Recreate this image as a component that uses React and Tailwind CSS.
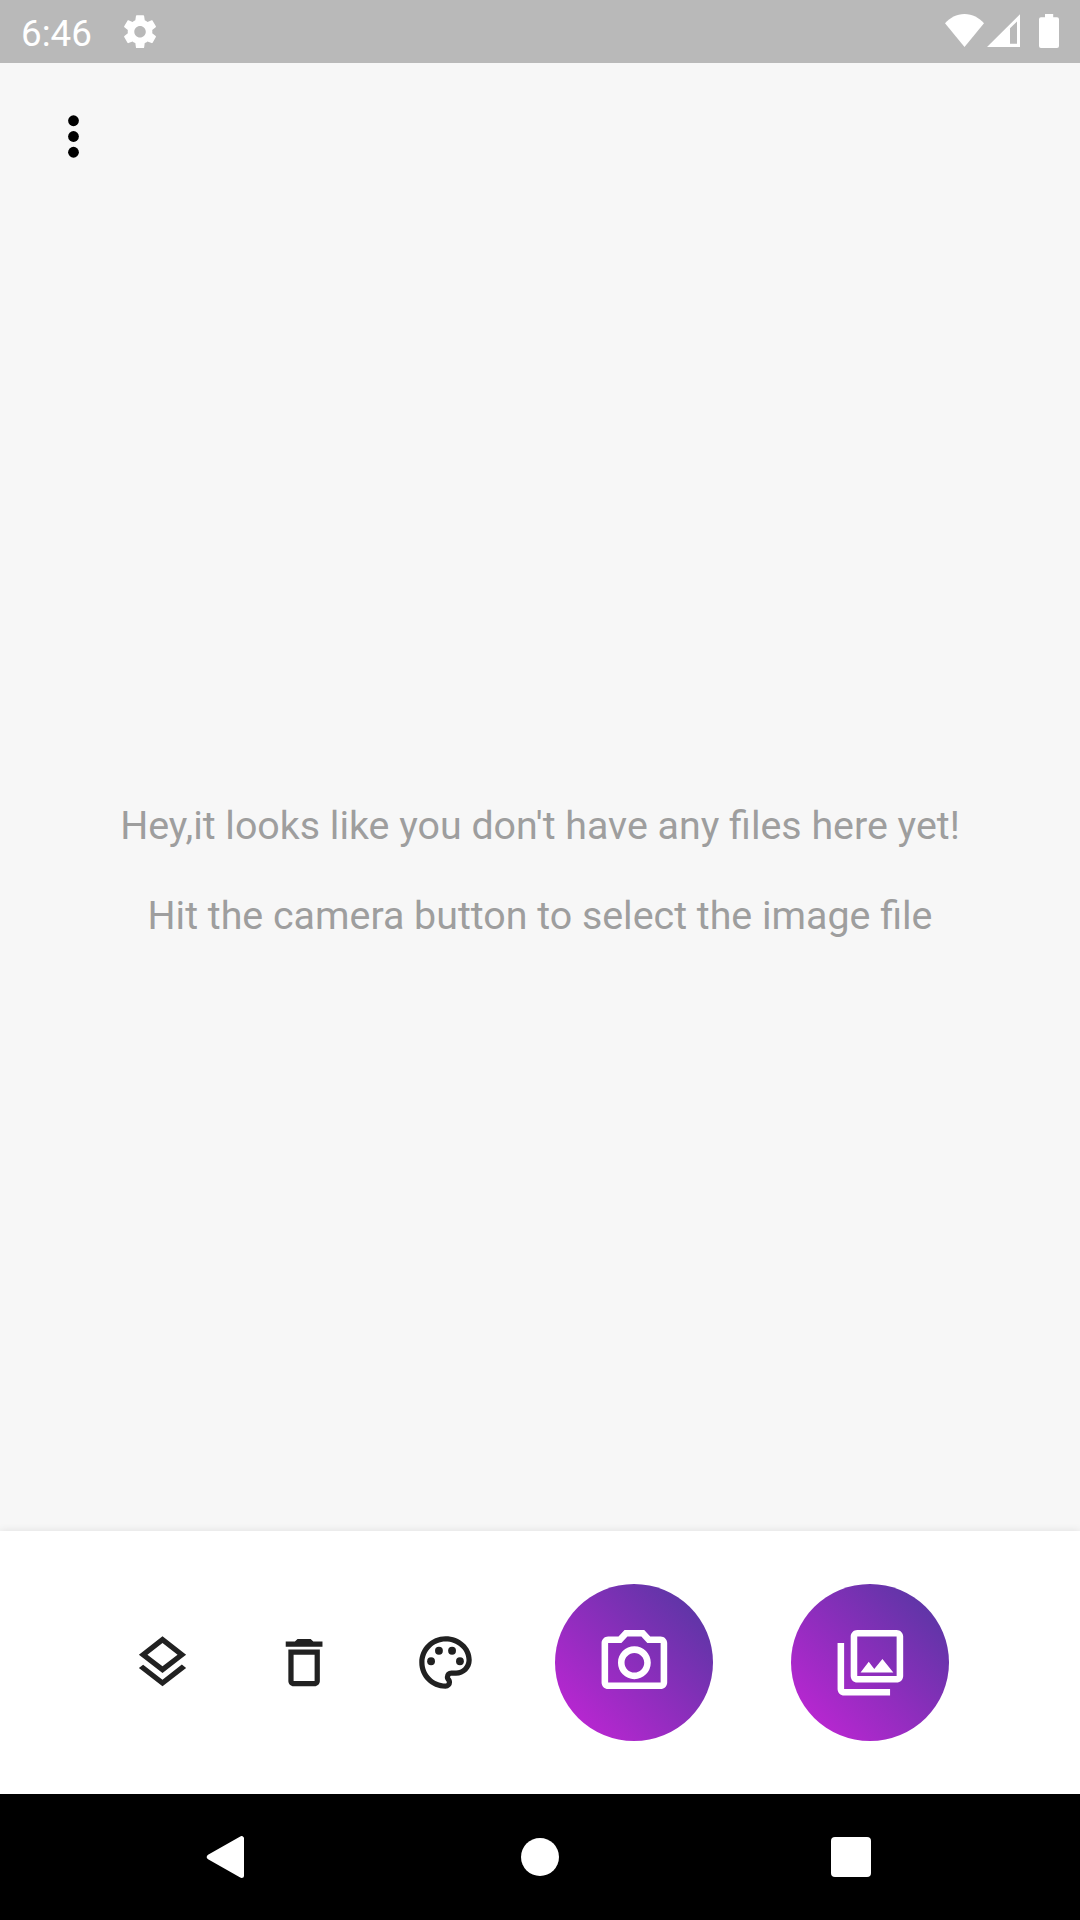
const layers =
  'M11.99 18.54l-7.37-5.73L3 14.07l9 7 9-7-1.63-1.27-7.38 5.74zM12 16l7.36-5.73L21 9l-9-7-9 7 1.63 1.27L12 16zm0-11.47L17.74 9 12 13.47 6.26 9 12 4.53z'
const trash =
  'M6 19c0 1.1.9 2 2 2h8c1.1 0 2-.9 2-2V7H6v12zM8 9h8v10H8V9zm7.5-5l-1-1h-5l-1 1H5v2h14V4z'
const palette =
  'M12 22C6.49 22 2 17.51 2 12S6.49 2 12 2s10 4.04 10 9c0 3.31-2.69 6-6 6h-1.77c-.28 0-.5.22-.5.5 0 .12.05.23.13.33.41.47.64 1.06.64 1.67A2.5 2.5 0 0 1 12 22zm0-18c-4.41 0-8 3.59-8 8s3.59 8 8 8c.28 0 .5-.22.5-.5a.54.54 0 0 0-.14-.35c-.41-.46-.63-1.05-.63-1.65a2.5 2.5 0 0 1 2.5-2.5H16c2.21 0 4-1.79 4-4 0-3.86-3.59-7-8-7z'
const camera =
  'M20 4h-3.17L15 2H9L7.17 4H4c-1.1 0-2 .9-2 2v12c0 1.1.9 2 2 2h16c1.1 0 2-.9 2-2V6c0-1.1-.9-2-2-2zm0 14H4V6h4.05l1.83-2h4.24l1.83 2H20v12zM12 7c-2.76 0-5 2.24-5 5s2.24 5 5 5 5-2.24 5-5-2.24-5-5-5zm0 8c-1.65 0-3-1.35-3-3s1.35-3 3-3 3 1.35 3 3-1.35 3-3 3z'
const gallery =
  'M20 4v12H8V4h12m0-2H8c-1.1 0-2 .9-2 2v12c0 1.1.9 2 2 2h12c1.1 0 2-.9 2-2V4c0-1.1-.9-2-2-2zm-8.5 9.67l1.69 2.26 2.48-3.1L19 15H9l2.5-3.33zM2 6v14c0 1.1.9 2 2 2h14v-2H4V6H2z'
const gear =
  'M19.43 12.98c.04-.32.07-.64.07-.98s-.03-.66-.07-.98l2.11-1.65c.19-.15.24-.42.12-.64l-2-3.46c-.12-.22-.39-.3-.61-.22l-2.49 1c-.52-.4-1.08-.73-1.69-.98l-.38-2.65C14.46 2.18 14.25 2 14 2h-4c-.25 0-.46.18-.49.42l-.38 2.65c-.61.25-1.17.59-1.69.98l-2.49-1c-.23-.09-.49 0-.61.22l-2 3.46c-.13.22-.07.49.12.64l2.11 1.65c-.04.32-.07.65-.07.98s.03.66.07.98l-2.11 1.65c-.19.15-.24.42-.12.64l2 3.46c.12.22.39.3.61.22l2.49-1c.52.4 1.08.73 1.69.98l.38 2.65c.03.24.24.42.49.42h4c.25 0 .46-.18.49-.42l.38-2.65c.61-.25 1.17-.59 1.69-.98l2.49 1c.23.09.49 0 .61-.22l2-3.46c.12-.22.07-.49-.12-.64l-2.11-1.65zM12 15.5c-1.93 0-3.5-1.57-3.5-3.5s1.57-3.5 3.5-3.5 3.5 1.57 3.5 3.5-1.57 3.5-3.5 3.5z'

function Icon({ d, className, children }) {
  return (
    <svg viewBox="0 0 24 24" fill="currentColor" className={className}>
      {d && <path d={d} />}
      {children}
    </svg>
  )
}

function StatusBar() {
  return (
    <header className="flex h-[63px] items-start justify-between bg-[#b9b9b9] pl-[21px] pr-[21px] text-white">
      <div className="flex items-start">
        <span className="h-[63px] w-[99px] pt-[2px] text-[36.75px] leading-[63px]">6:46</span>
        <Icon d={gear} className="mt-[12px] size-[39.375px] translate-x-[0.35px]" />
      </div>
      <div className="flex items-start pt-[14px]">
        <svg viewBox="0 0 39 33" fill="currentColor" className="h-[33px] w-[39px]">
          <path d="M19.5 33L0 9.2C5 3.8 11.500 0 19.500 0S34 3.800 39 9.200z" />
        </svg>
        <svg viewBox="0 0 33 33" fill="currentColor" className="ml-[3px] h-[33px] w-[33px]">
          <path fillRule="evenodd" d="M0 33L33 .3V33zM23 14.300V29.700H30V7.600z" />
        </svg>
        <svg viewBox="0 0 20 34" fill="currentColor" className="ml-[19px] h-[34px] w-[20px]">
          <path d="M6 0h8.200v3.300H18a2 2 0 0 1 2 2V32a2 2 0 0 1-2 2H2a2 2 0 0 1-2-2V5.300a2 2 0 0 1 2-2h4z" />
        </svg>
      </div>
    </header>
  )
}

function RoundButton({ d, label }) {
  return (
    <button
      aria-label={label}
      className="flex h-[157px] w-[158px] items-center justify-center rounded-[50%] bg-[linear-gradient(45deg,#c724d8_0%,#4f389f_100%)] text-white"
    >
      <Icon d={d} className="size-[78.75px] translate-y-[0.4px]" />
    </button>
  )
}

export default function App() {
  return (
    <div className="flex h-[1920px] w-[1080px] flex-col overflow-hidden bg-[#f7f7f7] font-[Roboto,sans-serif]">
      <StatusBar />
      <main className="flex flex-1 flex-col">
        <button aria-label="Menu" className="ml-[42px] mt-[42px] size-[63px] shrink-0 text-black">
          <Icon className="size-full">
            <circle cx="12" cy="6" r="2.050" />
            <circle cx="12" cy="12" r="2.050" />
            <circle cx="12" cy="18" r="2.050" />
          </Icon>
        </button>
        <div className="mt-[613px] flex flex-col text-center text-[39.375px] leading-[90px] text-[#9e9e9e]">
          <p>Hey,it looks like you don't have any files here yet!</p>
          <p>Hit the camera button to select the image file</p>
        </div>
      </main>
      <div className="flex h-[263px] shrink-0 items-center gap-[78px] bg-white pl-[131px] text-[#212121] shadow-[0_0_8px_rgba(0,0,0,0.1)]">
        <Icon d={layers} className="size-[63px]" />
        <Icon d={trash} className="ml-px size-[63px] -translate-x-[0.4px]" />
        <Icon d={palette} className="size-[63px]">
          <circle cx="6.5" cy="11.5" r="1.5" />
          <circle cx="9.5" cy="7.5" r="1.5" />
          <circle cx="14.5" cy="7.5" r="1.5" />
          <circle cx="17.5" cy="11.5" r="1.5" />
        </Icon>
        <RoundButton d={camera} label="Camera" />
        <RoundButton d={gallery} label="Gallery" />
      </div>
      <nav className="flex h-[126px] shrink-0 items-center justify-between bg-black pl-[206px] pr-[209px]">
        <svg viewBox="0 0 38 42" fill="#fff" stroke="#fff" strokeWidth="5" strokeLinejoin="round" className="h-[42px] w-[38px]">
          <path d="M3.300 21L35.500 2.600V39.400z" />
        </svg>
        <span className="ml-[5px] size-[38px] rounded-full bg-white" />
        <span className="size-10 rounded-[4px] bg-white" />
      </nav>
    </div>
  )
}
